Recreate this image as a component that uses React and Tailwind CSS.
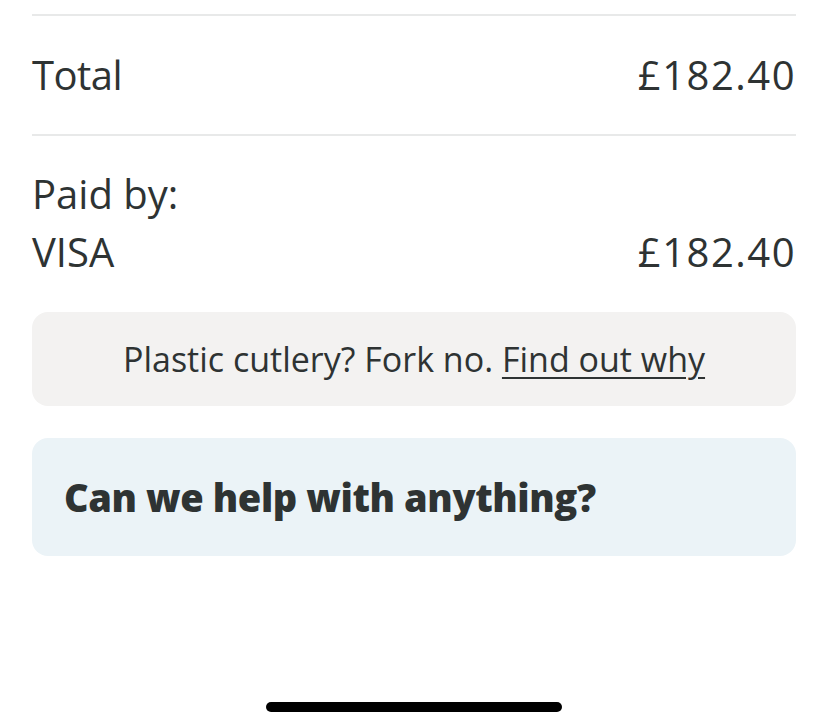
export default function App() {
    const font = { fontFamily: '"Open Sans", "Noto Sans", sans-serif' };

    return (
        <div className="flex h-[728px] w-[828px] flex-col bg-white px-8 text-[#2e3333]" style={font}>
            <div className="mt-[14px] h-[2px] bg-[#e8e9e9]" />

            <div className="flex h-[118px] items-center justify-between text-[40px]">
                <span className="tracking-[-0.5px]">Total</span>
                <span className="tracking-[1.5px]">£182.40</span>
            </div>

            <div className="h-[2px] bg-[#e8e9e9]" />

            <div className="pt-[29px] text-[40px] leading-[58px]">
                <p>Paid by:</p>
                <div className="flex justify-between">
                    <span>VISA</span>
                    <span className="tracking-[1.5px]">£182.40</span>
                </div>
            </div>

            <div className="mt-[31px] flex h-[94px] items-center justify-center rounded-2xl bg-[#f3f2f1] text-[34px]">
                <p>
                    Plastic cutlery? Fork no. <a className="underline decoration-2 underline-offset-[5px]">Find out why</a>
                </p>
            </div>

            <div className="mt-8 flex h-[118px] items-center rounded-2xl bg-[#ebf3f7] px-8">
                <p className="text-[38px] font-extrabold tracking-[-0.4px]">Can we help with anything?</p>
            </div>

            <div className="mt-auto mb-4 flex justify-center">
                <div className="h-[10px] w-[296px] rounded-full bg-black" />
            </div>
        </div>
    );
}
